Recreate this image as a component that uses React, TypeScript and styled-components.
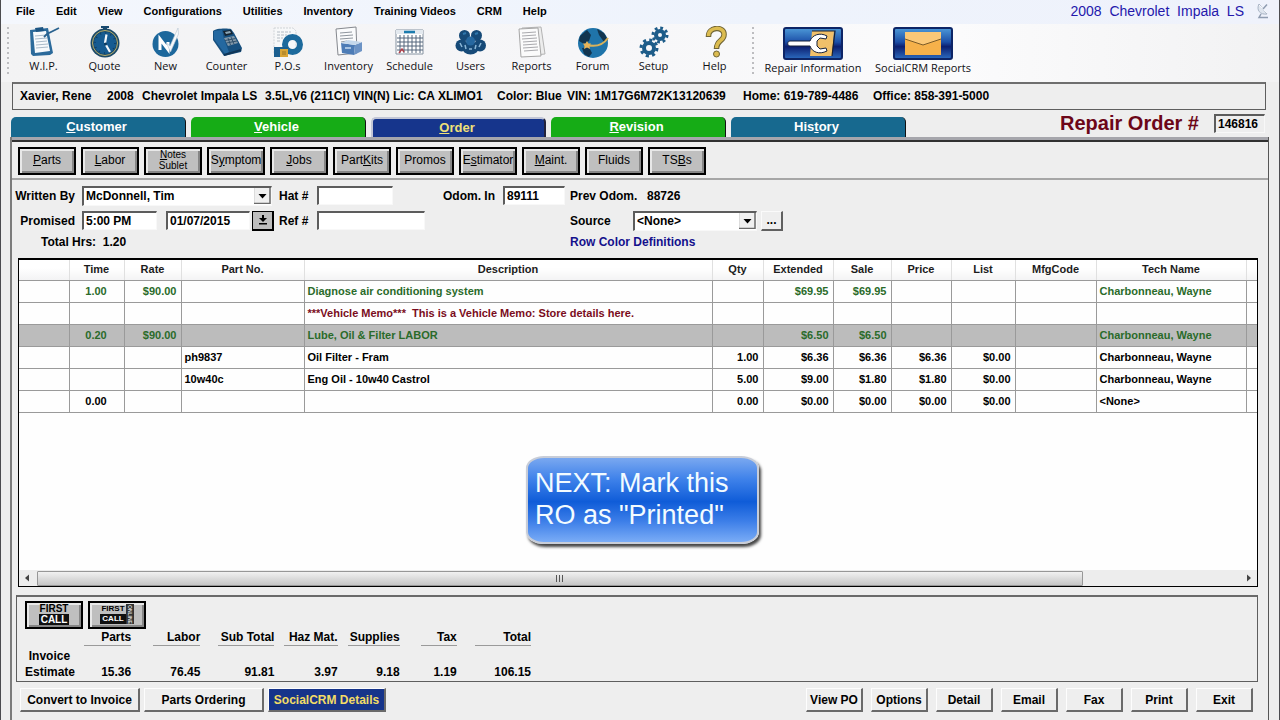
import React from "react";
import styled, { createGlobalStyle, css } from "styled-components";

const GlobalStyle = createGlobalStyle`
  *, *::before, *::after { box-sizing: border-box; }
  html, body { margin: 0; padding: 0; }
  body {
    background: #eeeeee;
    color: #000;
    font: bold 12px/16px "Liberation Sans", Arial, sans-serif;
  }
  button, input, select { font: inherit; color: inherit; }
`;

/* ---------- window ---------- */
const Window = styled.div`
  display: flex;
  flex-direction: column;
  min-height: 100vh;
  border-left: 1px solid #4c4c50;
  border-right: 1px solid #4c4c50;
`;

const MenuBar = styled.header`
  display: flex;
  align-items: center;
  justify-content: space-between;
  height: 24px;
  padding: 0 10px 2px 15px;
  background: linear-gradient(90deg, #f4f7fd, #eef3fc 60%, #eff2fb);
`;

const MenuList = styled.nav`
  display: flex;
  gap: 21px;
  font-size: 11px;
`;

const MenuItem = styled.button`
  padding: 0;
  border: 0;
  background: none;
  white-space: nowrap;
`;

const VehicleTitle = styled.div`
  display: flex;
  align-items: center;
  gap: 12px;
  font-weight: normal;
  font-size: 14px;
  color: #2418ac;
  white-space: pre;
`;

/* ---------- icon toolbar ---------- */
const IconBar = styled.div`
  display: flex;
  height: 58px;
  padding: 2px 0 0 6px;
  background: linear-gradient(90deg, #f3f3f4, #f6f6f8 45%, #fbfbfc 75%, #f2f2f3);
`;

const Grip = styled.div`
  width: 2px;
  height: 48px;
  margin: 1px 0;
  background: repeating-linear-gradient(#bdbdc0 0 2px, transparent 2px 5px);
`;

const ToolGroup = styled.div`
  display: flex;
  padding: 0 7px 0 4px;
`;

const Tool = styled.button<{ $wide?: boolean }>`
  display: flex;
  flex-direction: column;
  align-items: center;
  width: ${(p) => (p.$wide ? 110 : 61)}px;
  padding: 0;
  border: 0;
  background: none;
  font: 11px/16px "Open Sans", "Noto Sans", sans-serif;
  color: #101014;
  white-space: nowrap;

  svg { flex: none; display: block; height: ${(p) => (p.$wide ? 34 : 32)}px; }
`;

/* ---------- customer strip ---------- */
const InfoStrip = styled.div`
  display: grid;
  grid-template-columns: 87px 35px 123px 232px 70px 176px 130px auto;
  align-items: center;
  height: 28px;
  margin: 0 13px 0 11px;
  padding: 0 7px 1px;
  border: 1px solid #5e5e5e;
  border-top: 2px solid #6e6e6e;
  background: #eeeeee;
  white-space: nowrap;
`;

const TabRow = styled.div`
  display: flex;
  align-items: flex-end;
  justify-content: space-between;
  height: 27px;
  padding: 0 14px 0 10px;
`;

const Tabs = styled.nav`
  display: flex;
  align-items: flex-end;
  gap: 5px;
`;

const Tab = styled.button<{ $tone: "teal" | "green" | "navy" }>`
  width: 175px;
  height: 20px;
  padding: 0 3px 0 0;
  border: 0;
  border-right: 1px solid #111;
  border-radius: 5px 5px 0 0;
  font-size: 13px;
  line-height: 20px;
  color: #fff;
  background: ${(p) => ({ teal: "#17698f", green: "#16ac16", navy: "#16358c" })[p.$tone]};
  ${(p) =>
    p.$tone === "navy" &&
    css`
      border: 2px solid #c2c6d6;
      border-bottom: 0;
      border-right: 2px solid #23233c;
      line-height: 18px;
      color: #f0e078;
    `}
`;

const OrderNumber = styled.label`
  display: flex;
  align-items: center;
  gap: 15px;
  padding-bottom: 4px;
  font-size: 20px;
  line-height: 20px;
  color: #6c0618;
`;

const bevelIn = css`
  border: 1px solid;
  border-color: #5c5c5c #f8f8f8 #f8f8f8 #5c5c5c;
  border-top-width: 2px;
  border-left-width: 2px;
  border-radius: 0;
  background: #fff;
`;

const Field = styled.input<{ $w: number; $plain?: boolean }>`
  ${bevelIn}
  width: ${(p) => p.$w}px;
  height: 19px;
  padding: 0 2px;
  font-size: 12px;
  color: #000;
  background: ${(p) => (p.$plain ? "#eeeeee" : "#fff")};
`;

/* ---------- main panel ---------- */
const Panel = styled.main`
  display: flex;
  flex: 1;
  flex-direction: column;
  margin: 0 10px 0 9px;
  border-left: 2px solid #7c7c7c;
  border-right: 1px solid #555;
`;

const PanelEdge = styled.div`
  height: 5px;
  border-top: 3px solid #a6a6ac;
  border-bottom: 2px solid #303030;
`;

const CommandRow = styled.div`
  display: flex;
  gap: 5px;
  height: 38px;
  padding: 5px 6px 0;
  border-bottom: 2px solid #a6a6a6;
`;

const Command = styled.button<{ $small?: boolean }>`
  width: 58px;
  height: 28px;
  padding: 0 0 2px;
  border: 2px solid #000;
  box-shadow: inset 2px 2px 0 #e8e8e8, inset -2px -2px 0 #868686;
  background: #bfbfbf;
  font-weight: normal;
  font-size: ${(p) => (p.$small ? 10 : 12)}px;
  line-height: ${(p) => (p.$small ? 11 : 16)}px;
  white-space: nowrap;
  display: flex;
  align-items: center;
  justify-content: center;
  text-align: center;
`;

const Form = styled.form`
  display: flex;
  height: 78px;
  padding: 3px 0 0 2px;
`;

const FormSide = styled.div<{ $w?: number }>`
  width: ${(p) => (p.$w ? p.$w + "px" : "auto")};
`;

const FormLine = styled.div`
  display: flex;
  align-items: center;
  height: 25px;

  &:last-child { height: 18px; }
`;

const Caption = styled.label<{ $w: number; $right?: boolean }>`
  width: ${(p) => p.$w}px;
  flex: none;
  padding-right: ${(p) => (p.$right ? 7 : 0)}px;
  text-align: ${(p) => (p.$right ? "right" : "left")};
  white-space: pre;
`;

const Spacer = styled.span<{ $w: number }>`
  width: ${(p) => p.$w}px;
  flex: none;
`;

const SelectBox = styled.span<{ $w: number }>`
  position: relative;
  width: ${(p) => p.$w}px;
  height: 20px;

  select {
    ${bevelIn}
    appearance: none;
    width: 100%;
    height: 20px;
    padding: 0 20px 0 2px;
  }

  svg {
    position: absolute;
    top: 2px;
    right: 1px;
    pointer-events: none;
  }
`;

const SquareButton = styled.button<{ $dark?: boolean }>`
  display: flex;
  align-items: center;
  justify-content: center;
  width: 22px;
  height: 20px;
  padding: 0;
  border: 1px solid;
  border-color: ${(p) => (p.$dark ? "#000" : "#fafafa #606060 #606060 #fafafa")};
  border-right-width: 2px;
  border-bottom-width: 2px;
  background: ${(p) => (p.$dark ? "#bdbdbd" : "#eeeeee")};
`;

const ColorLink = styled.a`
  color: #14108c;
  text-decoration: none;
`;

/* ---------- grid ---------- */
const GridBox = styled.section`
  position: relative;
  display: flex;
  flex: 1;
  flex-direction: column;
  justify-content: space-between;
  margin: 0 10px 0 6px;
  border: 1px solid #000;
  border-top-width: 2px;
  background: #fefefe;
`;

const Grid = styled.table`
  width: 100%;
  table-layout: fixed;
  border-collapse: collapse;
  font-size: 11px;
  line-height: 15px;

  th {
    height: 20px;
    padding: 0;
    border-right: 1px solid #e0e0e0;
    border-bottom: 1px solid #9a9a9a;
    background: linear-gradient(#fff 40%, #f3f3f4);
    color: #1c1c1c;
  }

  td {
    height: 22px;
    padding: 0 4px 0 3px;
    border-right: 1px solid #9a9a9a;
    border-bottom: 1px solid #9a9a9a;
    white-space: pre;
    overflow: hidden;
  }

  th:last-child, td:last-child { border-right: 0; }
`;

const tones = { part: "#000", labor: "#2a6b2a", memo: "#7a0c20" };

const Row = styled.tr<{ $tone: keyof typeof tones; $selected?: boolean }>`
  color: ${(p) => tones[p.$tone]};
  background: ${(p) => (p.$selected ? "#bcbcbc" : "transparent")};
`;

const Cell = styled.td<{ $align: "left" | "right" | "center" }>`
  text-align: ${(p) => p.$align};
`;

const ScrollBar = styled.div`
  display: flex;
  align-items: center;
  gap: 7px;
  height: 16px;
  padding: 0 5px;
  background: #ededed;
`;

const Track = styled.div`
  flex: 1;
`;

const Thumb = styled.div`
  display: flex;
  align-items: center;
  justify-content: center;
  width: 87%;
  height: 15px;
  border: 1px solid #979797;
  border-radius: 1px;
  background: linear-gradient(#f1f1f1, #dedede 45%, #c6c6c6);
`;

const Callout = styled.aside`
  position: absolute;
  top: 196px;
  left: 50%;
  width: 233px;
  margin-left: -112px;
  padding: 9px 0 11px 7px;
  border: 2px solid #c8cdd8;
  border-radius: 18px / 12px;
  background: linear-gradient(#7aa8f0, #3f82ea 25%, #0f5cd8 52%, #3c7ee8 75%, #7aacf6);
  box-shadow: 2px 3px 3px #444;
  color: #f2fbff;
  font-weight: normal;
  font-size: 27px;
  line-height: 32px;
  white-space: nowrap;
`;

/* ---------- totals ---------- */
const Totals = styled.section`
  height: 87px;
  margin: 8px 10px 0 4px;
  padding: 4px 0 0 8px;
  border: 1px solid #5e5e5e;
  border-top: 2px solid #6a6a6a;
`;

const CallButtons = styled.div`
  display: flex;
  gap: 5px;
`;

const TotalsTable = styled.table`
  border-collapse: collapse;
  table-layout: fixed;
  width: 506px;
  margin-top: 1px;

  th, td { padding: 0; height: 16px; text-align: right; line-height: 15px; }
  thead th { height: 18px; vertical-align: top; }
`;

const Underlined = styled.span<{ $w: number }>`
  display: inline-block;
  width: ${(p) => p.$w}px;
  border-bottom: 1px solid #9a9a9a;
  white-space: nowrap;
`;

/* ---------- footer ---------- */
const Footer = styled.footer`
  display: flex;
  justify-content: space-between;
  height: 38px;
  padding: 6px 15px 0 8px;
`;

const ButtonSet = styled.div<{ $gap: number }>`
  display: flex;
  gap: ${(p) => p.$gap}px;
`;

const FlatButton = styled.button<{ $wide?: boolean; $accent?: boolean }>`
  width: ${(p) => (p.$accent ? 118 : p.$wide ? 120 : 57)}px;
  height: 24px;
  padding: 0;
  border: 1px solid;
  border-color: #fdfdfd #6a6a6a #6a6a6a #fdfdfd;
  border-right-width: 2px;
  border-bottom-width: 2px;
  background: ${(p) => (p.$accent ? "#16348a" : "#eeeeee")};
  color: ${(p) => (p.$accent ? "#f2dc66" : "#000")};
  white-space: nowrap;
`;

/* ---------- drawings ---------- */
const Dish = () => (
  <svg width="13" height="16" viewBox="0 0 13 16" fill="none" stroke="#a9b4c4">
    <path d="M3 1 C0 7 4 12 11 11 Z" fill="#dfe5ee" />
    <path d="M3 2 L11 10" stroke="#f6f8fb" />
    <path d="M7 6 L11 1.500 M5 11 L3 14.500 H12" stroke="#8f9cb0" strokeWidth="1.500" />
  </svg>
);

const Clipboard = () => (
  <svg width="32" height="32" viewBox="0 0 32 32">
    <path d="M2 4 L20 2 L25 27 L22 29 L5 30 L3 28 Z" fill="#2b6a9b" />
    <path d="M5 6 L18 5 L22 25 L7 27 Z" fill="#f6f9fc" />
    <path d="M7 2 L15 1 L16 5 L8 6 Z" fill="#1d5583" />
    <path d="M7 10 L18 9 M7 13 L19 12 M8 16 L19 15 M8 19 L20 18 M8 22 L20 21" stroke="#a9bac9" />
    <path d="M16 11 L19 8 L31 2" fill="none" stroke="#2a628f" strokeWidth="1.800" />
  </svg>
);
const Stopwatch = () => (
  <svg width="32" height="32" viewBox="0 0 32 32">
    <path d="M12 0 H20 V2 H18 V4 H14 V2 H12 Z" fill="#17496f" />
    <circle cx="16" cy="17" r="14.500" fill="#1b4a68" />
    <circle cx="16" cy="17" r="12.500" fill="none" stroke="#b9ae6c" strokeWidth="1" />
    <circle cx="16" cy="17" r="11" fill="#165b91" />
    <circle cx="16" cy="17" r="10" fill="none" stroke="#0e3c60" strokeWidth="1.500" strokeDasharray="1 4.236" />
    <path d="M17.500 8.500 L16 17 M17 19 L21 26" fill="none" stroke="#f4f8fb" strokeWidth="2.200" />
    <circle cx="16.500" cy="18" r="1.500" fill="#0e3c60" />
  </svg>
);
const NewBadge = () => (
  <svg width="32" height="32" viewBox="0 0 32 32">
    <circle cx="15.500" cy="18" r="13" fill="#1d689c" />
    <path d="M10 24 V13 L18 23.500 V16" fill="none" stroke="#fff" strokeWidth="3" />
    <path d="M16.500 17 L20 20 L28 2 L28.500 8 L20.500 26 Z" fill="#f6f9fb" stroke="#b6c5d1" strokeWidth="0.600" />
  </svg>
);
const Register = () => (
  <svg width="34" height="32" viewBox="0 0 34 32">
    <path d="M3 5 C5 2 18 2 21 3 L24 7 L32 22 L31 26 L14 30 L3 14 Z" fill="#17507f" />
    <path d="M4 5 L12 4 L14 13 L19 26 L15 28 L4 13 Z" fill="#2468a0" />
    <path d="M13 5 L21 4 L23 8 L15 10 Z" fill="#15222e" />
    <path d="M15 6 L20 5 L21 7 L16 8 Z" fill="#8aa5b6" />
    <path d="M14 12 L24 10 L28 17 L18 20 Z" fill="#8297a8" />
    <path d="M15 14.500 L25.500 12.500 M16.500 17 L27 15 M18 12 L20.500 19 M21 11 L24 18" stroke="#274a66" strokeWidth="0.900" />
    <path d="M14 29 L31 24" stroke="#0f3557" strokeWidth="2" />
  </svg>
);
const PurchaseOrder = () => (
  <svg width="32" height="32" viewBox="0 0 32 32">
    <path d="M2 2 H21 L24 5 V28 H2 Z" fill="#f7f8f9" stroke="#cfd3d7" strokeDasharray="2 1" />
    <path d="M5 6 H19 M5 9 H15 M5 12 H11 M5 15 H9" stroke="#b5bcc4" strokeDasharray="3 1" />
    <circle cx="20.500" cy="18.500" r="7.500" fill="none" stroke="#1d6a9c" strokeWidth="6" />
    <path d="M2 21 H16 V31 H2 Z" fill="#1c5f8f" />
    <path d="M8 23 H16 V31 H8 Z" fill="#d9a436" />
    <path d="M10 26 H14 M10 28 H14" stroke="#8a6a22" strokeWidth="0.800" />
  </svg>
);
const InventoryDoc = () => (
  <svg width="32" height="32" viewBox="0 0 32 32">
    <path d="M3 3 L23 1 L24 27 L5 29 Z" fill="#fafbfc" stroke="#85888e" />
    <path d="M7 7 L19 6 M7 10 L20 9 M7 13 L20 12 M8 16 L14 15" stroke="#8f969e" />
    <path d="M8 17 L22 19 L21 29 L9 27 Z" fill="#4d7cb6" />
    <path d="M22 19 L29 16 V25 L21 29 Z" fill="#6c93c5" />
    <path d="M8 17 L15 14 L29 16 L22 19 Z" fill="#c4d8ec" />
    <path d="M12 22 H18" stroke="#a9c4e2" strokeWidth="2" />
  </svg>
);
const CalendarGrid = () => (
  <svg width="32" height="32" viewBox="0 0 32 32">
    <path d="M2 4 H29 V28 H2 Z" fill="#fff" stroke="#8592a0" />
    <path d="M2 4 H29 V8 H2 Z" fill="#e3e9ef" />
    <path d="M10 6 H21" stroke="#1c7cae" strokeWidth="2.500" />
    <path d="M3 12 H29 M3 16 H29 M3 20 H29 M3 24 H29 M6 9 V27 M10 9 V27 M14 9 V27 M18 9 V27 M22 9 V27 M26 9 V27" stroke="#55677c" />
    <path d="M5 27 L8 23 L10 26" stroke="#b3404a" strokeWidth="1.400" fill="none" />
  </svg>
);
const People = () => (
  <svg width="32" height="32" viewBox="0 0 32 32">
    <g fill="#164a78">
      <circle cx="9.500" cy="9.500" r="5.500" />
      <circle cx="21.500" cy="9.500" r="5.500" />
      <circle cx="6.500" cy="19.500" r="6" />
      <circle cx="25" cy="19.500" r="6" />
      <ellipse cx="15.500" cy="22" rx="8.500" ry="6.500" />
    </g>
    <circle cx="15.500" cy="15" r="4.500" fill="#2668a0" />
    <path d="M8 8 L11 7 M20 8 L23 7" stroke="#2e76ac" strokeWidth="2" />
    <path d="M5 17 L7 21 M26 17 L24 21 M14 23 H17 M10 19 L11 23 M21 19 L20 23" stroke="#8cb8d8" strokeWidth="1.500" />
  </svg>
);
const ReportPages = () => (
  <svg width="32" height="32" viewBox="0 0 32 32">
    <path d="M6 2 L25 1 L29 28 L8 30 Z" fill="#ededed" stroke="#b4b4b4" />
    <path d="M3 3 L22 2 L25 30 L5 31 Z" fill="#fbfbfb" stroke="#a6a6a6" />
    <path d="M6 7 L20 6 M6 10 L20 9 M6 13 L21 12 M7 16 L21 15 M7 19 L21 18 M7 22 L22 21 M8 25 L22 24" stroke="#a9a9ad" />
  </svg>
);
const Globe = () => (
  <svg width="32" height="32" viewBox="0 0 32 32">
    <circle cx="16" cy="17" r="15" fill="#1f74aa" />
    <path d="M3 10 L10 4 L14 9 L12 15 L7 18 L2 15 Z M5 22 L12 21 L15 27 L12 31 L7 28 Z M20 3 L27 7 L31 14 L27 16 L22 9 Z" fill="#12354f" />
    <path d="M10 19 C18 21 26 19 31 12" fill="none" stroke="#d9b25a" strokeWidth="2" />
    <path d="M10 15 L11.500 17.500 L14 17.500 L12.500 20 L13 23 L10 21.500 L7 23 L7.500 20 L6 17.500 L8.500 17.500 Z" fill="#e8b458" />
  </svg>
);
const Gear = ({ cx, cy, r }: { cx: number; cy: number; r: number }) => (
  <g fill="none" stroke="#1d5c89">
    <circle cx={cx} cy={cy} r={r} strokeWidth="4" />
    <circle
      cx={cx}
      cy={cy}
      r={r + 3}
      strokeWidth="3"
      strokeDasharray={`${((r + 3) * Math.PI) / 8} ${((r + 3) * Math.PI) / 8}`}
    />
  </g>
);
const Gears = () => (
  <svg width="32" height="32" viewBox="0 0 32 32">
    <Gear cx={11} cy={22} r={5} />
    <Gear cx={22} cy={9} r={4} />
  </svg>
);
const Question = () => (
  <svg width="32" height="32" viewBox="0 0 32 32" fill="none">
    <path d="M9.500 11 C9 0 26 0 25 9 C25 15 17.500 14 17.500 23" stroke="#6f6436" strokeWidth="5.500" />
    <path d="M9.500 10 C9 0 26 0 25 9 C25 15 17.500 14 17.500 22" stroke="#dcbc50" strokeWidth="3.500" />
    <circle cx="17.500" cy="28" r="3" fill="#dcbc50" stroke="#6f6436" />
  </svg>
);

const PlateBase = ({ id }: { id: string }) => (
  <>
    <defs>
      <linearGradient id={id} x1="0" y1="0" x2="0" y2="1">
        <stop offset="0" stopColor="#4d9ad8" />
        <stop offset="0.450" stopColor="#1c4fa8" />
        <stop offset="0.600" stopColor="#0c1f70" />
        <stop offset="1" stopColor="#2c6cc0" />
      </linearGradient>
    </defs>
    <rect x="1" y="2" width="58" height="31" rx="2" fill={`url(#${id})`} stroke="#0d2566" strokeWidth="2" />
  </>
);
const WrenchPlate = () => (
  <svg width="60" height="34" viewBox="0 0 60 34">
    <PlateBase id="plate-wrench" />
    <path d="M29 5 H51 L49 30 H27 Z" fill="#f0c06a" />
    <path d="M29 5 H52 L49 30" fill="none" stroke="#1a2030" strokeWidth="1.200" />
    <path d="M7 15 C4 15 4 20 7 20 H27 C29 26 36 29 44 25 L43 22 L37 23 L34 20 V15 L37 12 L43 13 L44 10 C37 6 29 9 27 15 Z" fill="#fff" stroke="#16223c" strokeWidth="1" />
  </svg>
);
const EnvelopePlate = () => (
  <svg width="60" height="34" viewBox="0 0 60 34">
    <PlateBase id="plate-mail" />
    <rect x="12" y="6" width="36" height="23" fill="#f6b14a" />
    <path d="M12 6 H48 V13 L30 19 L12 13 Z" fill="#fbc877" />
    <path d="M12 13 L30 19 L48 13" fill="none" stroke="#7a5a28" />
  </svg>
);

const DropArrow = () => (
  <svg width="17" height="16" viewBox="0 0 17 16">
    <path d="M0 0 H17 V16 H0 Z" fill="#f0f0f0" />
    <path d="M0.500 0 V16" stroke="#dcdcdc" />
    <path d="M16 0 V15.500 H0" fill="none" stroke="#6a6a6a" strokeWidth="1.500" />
    <path d="M4.500 6 H12.500 L8.500 10.500 Z" fill="#000" />
  </svg>
);
const DownTo = () => (
  <svg width="12" height="12" viewBox="0 0 12 12">
    <path d="M5 1 H7 V4 H10 L6 8 L2 4 H5 Z M2 9 H10 V10.500 H2 Z" fill="#000" />
  </svg>
);
const ScrollArrow = ({ back }: { back?: boolean }) => (
  <svg width="6" height="8" viewBox="0 0 6 8">
    <path d={back ? "M5 0.500 V7.500 L1 4 Z" : "M1 0.500 V7.500 L5 4 Z"} fill="#444" />
  </svg>
);
const ThumbGrip = () => (
  <svg width="9" height="7" viewBox="0 0 9 7">
    <path d="M1.500 0 V7 M4.500 0 V7 M7.500 0 V7" stroke="#555" />
  </svg>
);

/* First Call wordmarks: dark FIRST over a reversed CALL */
const Wordmark = styled.span<{ $small?: boolean }>`
  display: flex;
  align-items: center;
  font-weight: bold;
  font-size: ${(p) => (p.$small ? 8 : 10)}px;
  line-height: ${(p) => (p.$small ? 10 : 11)}px;
`;
const WordStack = styled.span`
  display: flex;
  flex-direction: column;
`;
const Reversed = styled.span`
  padding: 0 2px;
  background: #111;
  color: #fff;
`;
const Sideways = styled.span`
  writing-mode: vertical-rl;
  height: 20px;
  width: 8px;
  background: #333;
  color: #ddd;
  font-size: 5px;
  line-height: 8px;
`;

/* ---------- data ---------- */
const menus = ["File", "Edit", "View", "Configurations", "Utilities", "Inventory", "Training Videos", "CRM", "Help"];

const tools: [string, React.FC][] = [
  ["W.I.P.", Clipboard],
  ["Quote", Stopwatch],
  ["New", NewBadge],
  ["Counter", Register],
  ["P.O.s", PurchaseOrder],
  ["Inventory", InventoryDoc],
  ["Schedule", CalendarGrid],
  ["Users", People],
  ["Reports", ReportPages],
  ["Forum", Globe],
  ["Setup", Gears],
  ["Help", Question],
];

const customer = [
  "Xavier, Rene",
  "2008",
  "Chevrolet Impala LS",
  "3.5L,V6 (211CI) VIN(N) Lic: CA XLIMO1",
  "Color: Blue",
  "VIN: 1M17G6M72K13120639",
  "Home: 619-789-4486",
  "Office: 858-391-5000",
];

/* "&" precedes the access key of a caption */
const tabs: [string, "teal" | "green" | "navy"][] = [
  ["&Customer", "teal"],
  ["&Vehicle", "green"],
  ["&Order", "navy"],
  ["&Revision", "green"],
  ["His&tory", "teal"],
];

const commands = ["&Parts", "&Labor", "&Notes|Sublet", "S&ymptom", "&Jobs", "Part&Kits", "Promos", "E&stimator", "&Maint.", "Fluids", "TS&Bs"];

const columns: { title: string; width?: number; align: "left" | "right" | "center" }[] = [
  { title: "", width: 50, align: "left" },
  { title: "Time", width: 55, align: "center" },
  { title: "Rate", width: 57, align: "right" },
  { title: "Part No.", width: 123, align: "left" },
  { title: "Description", align: "left" },
  { title: "Qty", width: 51, align: "right" },
  { title: "Extended", width: 70, align: "right" },
  { title: "Sale", width: 58, align: "right" },
  { title: "Price", width: 60, align: "right" },
  { title: "List", width: 64, align: "right" },
  { title: "MfgCode", width: 81, align: "left" },
  { title: "Tech Name", width: 150, align: "left" },
  { title: "", width: 11, align: "left" },
];

const rows: { tone: keyof typeof tones; selected?: boolean; cells: string[] }[] = [
  { tone: "labor", cells: ["", "1.00", "$90.00", "", "Diagnose air conditioning system", "", "$69.95", "$69.95", "", "", "", "Charbonneau, Wayne", ""] },
  { tone: "memo", cells: ["", "", "", "", "***Vehicle Memo***  This is a Vehicle Memo: Store details here.", "", "", "", "", "", "", "", ""] },
  { tone: "labor", selected: true, cells: ["", "0.20", "$90.00", "", "Lube, Oil & Filter LABOR", "", "$6.50", "$6.50", "", "", "", "Charbonneau, Wayne", ""] },
  { tone: "part", cells: ["", "", "", "ph9837", "Oil Filter - Fram", "1.00", "$6.36", "$6.36", "$6.36", "$0.00", "", "Charbonneau, Wayne", ""] },
  { tone: "part", cells: ["", "", "", "10w40c", "Eng Oil - 10w40 Castrol", "5.00", "$9.00", "$1.80", "$1.80", "$0.00", "", "Charbonneau, Wayne", ""] },
  { tone: "part", cells: ["", "0.00", "", "", "", "0.00", "$0.00", "$0.00", "$0.00", "$0.00", "", "<None>", ""] },
];

const totals: { name: string; value: string; col: number; line: number }[] = [
  { name: "Parts", value: "15.36", col: 61, line: 47 },
  { name: "Labor", value: "76.45", col: 69, line: 47 },
  { name: "Sub Total", value: "91.81", col: 74, line: 56 },
  { name: "Haz Mat.", value: "3.97", col: 63, line: 54 },
  { name: "Supplies", value: "9.18", col: 62, line: 52 },
  { name: "Tax", value: "1.19", col: 57, line: 36 },
  { name: "Total", value: "106.15", col: 74, line: 56 },
];

const actions = ["View PO", "Options", "Detail", "Email", "Fax", "Print", "Exit"];

const Keyed = ({ text }: { text: string }) => {
  const at = text.indexOf("&");
  if (at < 0) return <>{text}</>;
  return (
    <span>
      {text.slice(0, at)}
      <u>{text[at + 1]}</u>
      {text.slice(at + 2)}
    </span>
  );
};

export default function App() {
  return (
    <Window>
      <GlobalStyle />
      <MenuBar>
        <MenuList>
          {menus.map((m) => (
            <MenuItem key={m} type="button">{m}</MenuItem>
          ))}
        </MenuList>
        <VehicleTitle>
          {"2008  Chevrolet  Impala  LS"}
          <Dish />
        </VehicleTitle>
      </MenuBar>

      <IconBar>
        <Grip />
        <ToolGroup>
          {tools.map(([name, Icon]) => (
            <Tool key={name} type="button">
              <Icon />
              {name}
            </Tool>
          ))}
        </ToolGroup>
        <Grip />
        <ToolGroup>
          <Tool type="button" $wide>
            <WrenchPlate />
            Repair Information
          </Tool>
          <Tool type="button" $wide>
            <EnvelopePlate />
            SocialCRM Reports
          </Tool>
        </ToolGroup>
      </IconBar>

      <InfoStrip>
        {customer.map((c) => (
          <span key={c}>{c}</span>
        ))}
      </InfoStrip>

      <TabRow>
        <Tabs>
          {tabs.map(([name, tone]) => (
            <Tab key={name} type="button" $tone={tone}>
              <Keyed text={name} />
            </Tab>
          ))}
        </Tabs>
        <OrderNumber>
          Repair Order #
          <Field $w={51} $plain defaultValue="146816" />
        </OrderNumber>
      </TabRow>

      <Panel>
        <PanelEdge />
        <CommandRow>
          {commands.map((c) => {
            const [first, second] = c.split("|");
            return (
              <Command key={c} type="button" $small={!!second}>
                <span>
                  <Keyed text={first} />
                  {second && <br />}
                  {second}
                </span>
              </Command>
            );
          })}
        </CommandRow>

        <Form>
          <FormSide $w={556}>
            <FormLine>
              <Caption htmlFor="writer" $w={68} $right>Written By</Caption>
              <SelectBox $w={190}>
                <select id="writer" defaultValue="McDonnell, Tim">
                  <option>McDonnell, Tim</option>
                </select>
                <DropArrow />
              </SelectBox>
              <Spacer $w={7} />
              <Caption htmlFor="hat" $w={38}>Hat #</Caption>
              <Field id="hat" $w={76} />
              <Spacer $w={50} />
              <Caption htmlFor="odom" $w={60}>Odom. In</Caption>
              <Field id="odom" $w={62} defaultValue="89111" />
            </FormLine>
            <FormLine>
              <Caption htmlFor="time" $w={68} $right>Promised</Caption>
              <Field id="time" $w={75} defaultValue="5:00 PM" />
              <Spacer $w={9} />
              <Field aria-label="Promised date" $w={84} defaultValue="01/07/2015" />
              <Spacer $w={2} />
              <SquareButton type="button" $dark aria-label="Pick date">
                <DownTo />
              </SquareButton>
              <Spacer $w={5} />
              <Caption htmlFor="ref" $w={38}>Ref #</Caption>
              <Field id="ref" $w={108} />
            </FormLine>
            <FormLine>
              <Spacer $w={27} />
              <span>Total Hrs:&nbsp; 1.20</span>
            </FormLine>
          </FormSide>
          <FormSide>
            <FormLine>
              <Caption as="span" $w={77}>Prev Odom.</Caption>
              <span>88726</span>
            </FormLine>
            <FormLine>
              <Caption htmlFor="source" $w={63}>Source</Caption>
              <SelectBox $w={124}>
                <select id="source" defaultValue="<None>">
                  <option>{"<None>"}</option>
                </select>
                <DropArrow />
              </SelectBox>
              <Spacer $w={4} />
              <SquareButton type="button">...</SquareButton>
            </FormLine>
            <FormLine>
              <ColorLink href="#">Row Color Definitions</ColorLink>
            </FormLine>
          </FormSide>
        </Form>

        <GridBox>
          <Grid>
            <colgroup>
              {columns.map((c, i) => (
                <col key={i} width={c.width} />
              ))}
            </colgroup>
            <thead>
              <tr>
                {columns.map((c, i) => (
                  <th key={i}>{c.title}</th>
                ))}
              </tr>
            </thead>
            <tbody>
              {rows.map((r, i) => (
                <Row key={i} $tone={r.tone} $selected={r.selected}>
                  {r.cells.map((c, j) => (
                    <Cell key={j} $align={columns[j].align}>{c}</Cell>
                  ))}
                </Row>
              ))}
            </tbody>
          </Grid>
          <ScrollBar>
            <ScrollArrow back />
            <Track>
              <Thumb>
                <ThumbGrip />
              </Thumb>
            </Track>
            <ScrollArrow />
          </ScrollBar>
          <Callout>
            NEXT: Mark this
            <br />
            RO as "Printed"
          </Callout>
        </GridBox>

        <Totals>
          <CallButtons>
            <Command type="button">
              <Wordmark>
                <WordStack>
                  <span>FIRST</span>
                  <Reversed>CALL</Reversed>
                </WordStack>
              </Wordmark>
            </Command>
            <Command type="button">
              <Wordmark $small>
                <WordStack>
                  <span>FIRST</span>
                  <Reversed>CALL</Reversed>
                </WordStack>
                <Sideways>ONLINE</Sideways>
              </Wordmark>
            </Command>
          </CallButtons>
          <TotalsTable>
            <colgroup>
              <col width={45} />
              {totals.map((t) => (
                <col key={t.name} width={t.col} />
              ))}
            </colgroup>
            <thead>
              <tr>
                <td />
                {totals.map((t) => (
                  <th key={t.name}>
                    <Underlined $w={t.line}>{t.name}</Underlined>
                  </th>
                ))}
              </tr>
            </thead>
            <tbody>
              <tr>
                <th>Invoice</th>
                {totals.map((t) => (
                  <td key={t.name} />
                ))}
              </tr>
              <tr>
                <th>Estimate</th>
                {totals.map((t) => (
                  <td key={t.name}>{t.value}</td>
                ))}
              </tr>
            </tbody>
          </TotalsTable>
        </Totals>

        <Footer>
          <ButtonSet $gap={4}>
            <FlatButton type="button" $wide>Convert to Invoice</FlatButton>
            <FlatButton type="button" $wide>Parts Ordering</FlatButton>
            <FlatButton type="button" $accent>SocialCRM Details</FlatButton>
          </ButtonSet>
          <ButtonSet $gap={8}>
            {actions.map((a) => (
              <FlatButton key={a} type="button">{a}</FlatButton>
            ))}
          </ButtonSet>
        </Footer>
      </Panel>
    </Window>
  );
}
